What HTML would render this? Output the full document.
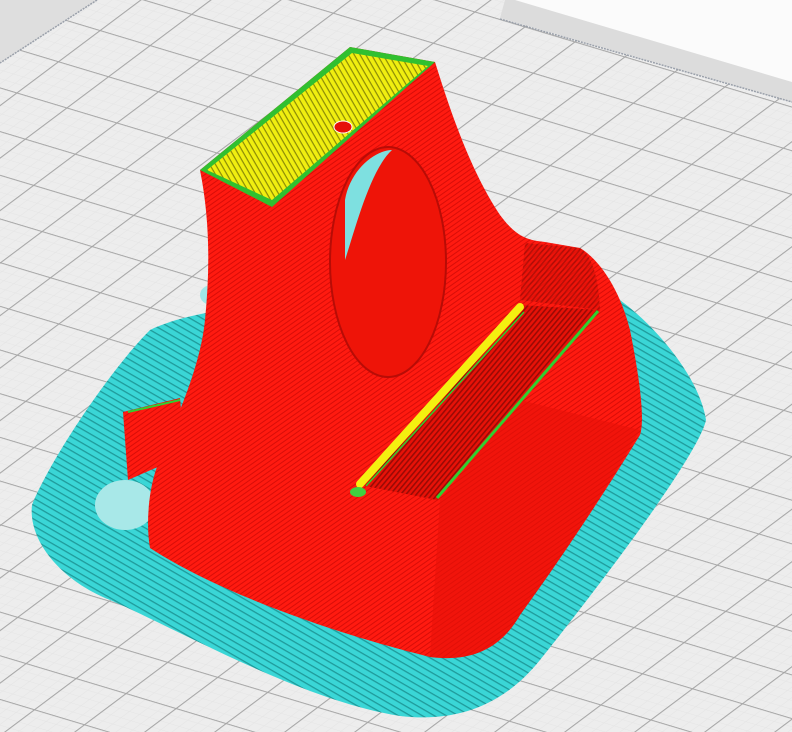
<!DOCTYPE html>
<html><head><meta charset="utf-8"><style>html,body{margin:0;padding:0;background:#fff}svg{display:block}</style></head>
<body>
<svg width="792" height="732" viewBox="0 0 792 732" xmlns="http://www.w3.org/2000/svg">
<defs>
<pattern id="grid" width="50" height="52" patternUnits="userSpaceOnUse" patternTransform="matrix(1 0.3 -0.8 0.6 0 0)">
<rect width="50" height="52" fill="#ededed"/>
<path d="M10 0V52M20 0V52M30 0V52M40 0V52M0 10.4H50M0 20.8H50M0 31.2H50M0 41.6H50" stroke="#e3e3e3" stroke-width="0.5" fill="none"/>
<path d="M0.6 0V52M0 0.6H50" stroke="#a6a6a6" stroke-width="1.3" fill="none"/>
</pattern>
<pattern id="cy" width="6" height="6" patternUnits="userSpaceOnUse" patternTransform="rotate(30)">
<rect width="6" height="6" fill="#3ad6d6"/><rect width="6" height="1.3" fill="#1f9a9a"/>
</pattern>
<pattern id="rd" width="4" height="4" patternUnits="userSpaceOnUse" patternTransform="rotate(-35)">
<rect width="4" height="4" fill="#ff1a10"/><rect width="4" height="1" fill="#d80d08"/>
</pattern>
<pattern id="rd2" width="4" height="4" patternUnits="userSpaceOnUse" patternTransform="rotate(-50)">
<rect width="4" height="4" fill="#e81208"/><rect width="4" height="1.6" fill="#9a0a05"/>
</pattern>
<pattern id="yl" width="5" height="5" patternUnits="userSpaceOnUse" patternTransform="rotate(60)">
<rect width="5" height="5" fill="#f0ee10"/><rect width="5" height="1.2" fill="#8a8a06"/>
</pattern>
</defs>
<rect width="792" height="732" fill="url(#grid)"/>
<polygon points="0,0 97,0 0,63" fill="#dedede"/>
<line x1="97" y1="0" x2="0" y2="63" stroke="#9aa0aa" stroke-width="1.5" stroke-dasharray="2 1"/>
<polygon points="505,0 792,0 792,102 500,18" fill="#dcdcdc"/>
<polygon points="515,0 792,0 792,82" fill="#fbfbfb"/>
<line x1="500" y1="19" x2="792" y2="102" stroke="#9aa0aa" stroke-width="1.5" stroke-dasharray="2 1"/>
<path d="M150,330 C190,310 280,300 330,305 L620,300 C660,330 700,380 706,420 C700,450 620,560 540,660 C500,710 450,722 400,716 C300,700 180,630 110,600 C60,580 28,540 32,505 C50,460 110,370 150,330 Z" fill="url(#cy)"/>
<ellipse cx="125" cy="505" rx="30" ry="25" fill="#a8e8e8"/>
<path d="M330,250 C350,180 400,160 400,200 C380,230 360,255 330,270Z" fill="#6fd8dc"/>
<ellipse cx="212" cy="295" rx="12" ry="10" fill="#9fe6e6"/>
<path d="M200,170 L350,47 L435,62 C450,110 470,170 500,215 C515,235 525,240 545,242 L580,248 C600,260 620,290 630,330 C640,380 645,420 640,435 C600,500 560,560 520,615 C500,650 470,662 430,657 C360,640 230,600 150,548 C145,520 150,480 160,460 C175,420 200,370 205,320 C210,270 210,220 200,170 Z" fill="url(#rd)"/>
<polygon points="123,412 180,398 185,455 128,480" fill="url(#rd)"/>
<line x1="128" y1="412" x2="180" y2="400" stroke="#30d030" stroke-width="2"/>
<ellipse cx="388" cy="262" rx="58" ry="115" fill="#ee1408" stroke="#b80c06" stroke-width="2"/>
<path d="M345,200 C350,170 375,150 392,150 C370,170 355,230 345,260Z" fill="#7ee0e0"/>
<path d="M520,400 L640,430 C600,500 560,560 520,615 C500,650 470,662 430,657 L440,500Z" fill="#e81008" opacity="0.6"/>
<polygon points="360,485 520,305 600,310 437,500" fill="url(#rd2)"/>
<line x1="360" y1="484" x2="520" y2="307" stroke="#f4f010" stroke-width="8" stroke-linecap="round"/>
<line x1="366" y1="486" x2="524" y2="312" stroke="#30d030" stroke-width="1.5"/>
<line x1="437" y1="498" x2="598" y2="311" stroke="#30d030" stroke-width="3"/>
<ellipse cx="358" cy="492" rx="8" ry="5" fill="#40d040"/>
<path d="M525,243 L580,248 C590,255 598,270 600,310 L520,300Z" fill="url(#rd2)" opacity="0.7"/>
<polygon points="200,170 350,47 435,62 272,207" fill="#30c030"/>
<polygon points="207,170 352,53 428,66 272,200" fill="url(#yl)"/>
<ellipse cx="343" cy="127" rx="9" ry="6" fill="#e61008" stroke="#fff" stroke-width="1"/>
</svg>
</body></html>
